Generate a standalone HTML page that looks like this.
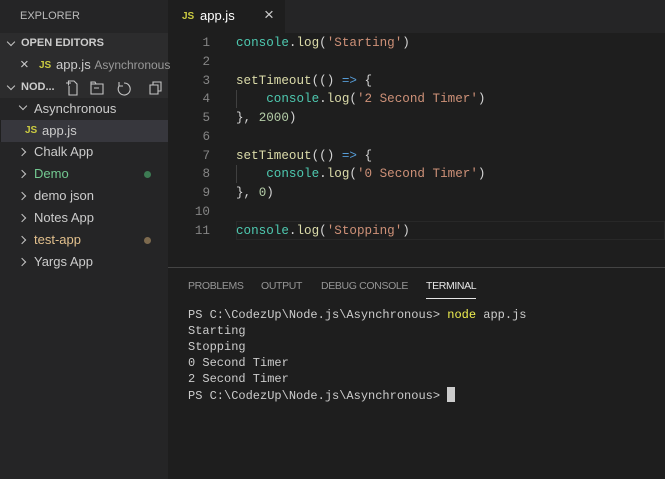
<!DOCTYPE html>
<html><head><style>
*{margin:0;padding:0;box-sizing:border-box}
body{width:665px;height:479px;background:#1e1e1e;font-family:"Liberation Sans",sans-serif;position:relative;overflow:hidden;color:#ccc}
.sb{position:absolute;left:0;top:0;width:168px;height:479px;background:#252526}
.abs{position:absolute;white-space:nowrap}
.row{position:absolute;left:0;width:168px;height:22px;font-size:13px;line-height:22px;color:#ccc;white-space:nowrap}
.chev{position:absolute;width:6px;height:6px;border-right:1.3px solid #c5c5c5;border-bottom:1.3px solid #c5c5c5}
.js{color:#cbcb41;font-weight:bold;font-size:10px;font-family:"Liberation Sans",sans-serif}
.code{position:absolute;left:170px;top:34px;font-family:"Liberation Mono",monospace;font-size:12.6px;line-height:18.75px}
.ln{position:absolute;width:40px;text-align:right;color:#858585}
.c{position:absolute;left:66px;color:#d4d4d4;white-space:pre}
.f{color:#4ec9b0}.m{color:#dcdcaa}.s{color:#ce9178}.k{color:#569cd6}.n{color:#b5cea8}
.term{position:absolute;left:188px;top:306px;font-family:"Liberation Mono",monospace;font-size:12px;line-height:16px;color:#ccc;white-space:pre}
.pt{position:absolute;top:280px;font-size:10.5px;letter-spacing:-0.35px;color:#969696;white-space:nowrap}
</style></head><body>
<div class="sb">
  <div class="abs" style="left:20px;top:10px;font-size:11px;color:#bbb">EXPLORER</div>
  <div class="abs" style="left:0;top:33px;width:168px;height:65px;background:#2c2c2d"></div>
  <div class="chev" style="left:8px;top:39px;transform:rotate(45deg)"></div>
  <div class="abs" style="left:21px;top:37px;font-size:11px;font-weight:bold;color:#ccc">OPEN EDITORS</div>
  <div class="abs" style="left:20px;top:57px;font-size:15px;color:#ccc;line-height:16px">×</div>
  <div class="abs js" style="left:39px;top:60px">JS</div>
  <div class="abs" style="left:56px;top:57px;font-size:13px;color:#ccc">app.js <span style="font-size:12px;color:#999">Asynchronous</span></div>
  <div class="chev" style="left:8px;top:83px;transform:rotate(45deg)"></div>
  <div class="abs" style="left:21px;top:81px;font-size:11px;font-weight:bold;color:#ccc">NOD...</div>
  <svg class="abs" style="left:64px;top:79px" width="100" height="18" fill="none" stroke="#c5c5c5" stroke-width="1.1">
    <path d="M5 2h5l3 3v11H5v-9M2 4h5M4.5 1.5v5"/>
    <path d="M27 5h12v10H27zM27 5v-2h4l1 2M30 9h5"/>
    <path d="M60 4a6 6 0 1 1-5 3M55 3v4h4"/>
    <path d="M86 6h8v9h-8zM89 6V3h8v9h-3"/>
  </svg>
  <div class="row" style="top:98px"><div class="chev" style="left:20px;top:5px;transform:rotate(45deg)"></div><span style="position:absolute;left:34px">Asynchronous</span></div>
  <div class="row" style="top:120px;background:#37373d;border-left:1px solid #1f1f1f"><span class="js" style="position:absolute;left:24px;top:0">JS</span><span style="position:absolute;left:41px">app.js</span></div>
  <div class="row" style="top:141px"><div class="chev" style="left:19px;top:8px;transform:rotate(-45deg)"></div><span style="position:absolute;left:34px">Chalk App</span></div>
  <div class="row" style="top:163px;color:#73c991"><div class="chev" style="left:19px;top:8px;transform:rotate(-45deg)"></div><span style="position:absolute;left:34px">Demo</span><span style="position:absolute;left:144px;top:8px;width:7px;height:7px;border-radius:50%;background:#3d7b53"></span></div>
  <div class="row" style="top:185px"><div class="chev" style="left:19px;top:8px;transform:rotate(-45deg)"></div><span style="position:absolute;left:34px">demo json</span></div>
  <div class="row" style="top:207px"><div class="chev" style="left:19px;top:8px;transform:rotate(-45deg)"></div><span style="position:absolute;left:34px">Notes App</span></div>
  <div class="row" style="top:229px;color:#e2c08d"><div class="chev" style="left:19px;top:8px;transform:rotate(-45deg)"></div><span style="position:absolute;left:34px">test-app</span><span style="position:absolute;left:144px;top:8px;width:7px;height:7px;border-radius:50%;background:#7d6a4e"></span></div>
  <div class="row" style="top:251px"><div class="chev" style="left:19px;top:8px;transform:rotate(-45deg)"></div><span style="position:absolute;left:34px">Yargs App</span></div>
</div>
<div class="abs" style="left:168px;top:0;width:497px;height:33px;background:#252526"></div>
<div class="abs" style="left:168px;top:0;width:117px;height:33px;background:#1e1e1e"></div>
<div class="abs js" style="left:182px;top:11px">JS</div>
<div class="abs" style="left:200px;top:8px;font-size:13px;color:#fff">app.js</div>
<div class="abs" style="left:264px;top:5px;font-size:17px;color:#ccc">×</div>
<div class="abs" style="left:236px;top:221px;width:429px;height:19px;border:1px solid #282828"></div>
<div class="abs" style="left:236px;top:165px;width:1px;height:18px;background:#404040"></div>
<div class="abs" style="left:236px;top:90px;width:1px;height:18px;background:#404040"></div>
<div class="code">
<div class="ln" style="top:0">1</div><div class="c" style="top:0"><span class="f">console</span>.<span class="m">log</span>(<span class="s">'Starting'</span>)</div>
<div class="ln" style="top:18.75px">2</div>
<div class="ln" style="top:37.5px">3</div><div class="c" style="top:37.5px"><span class="m">setTimeout</span>(() <span class="k">=&gt;</span> {</div>
<div class="ln" style="top:56.25px">4</div><div class="c" style="top:56.25px">    <span class="f">console</span>.<span class="m">log</span>(<span class="s">'2 Second Timer'</span>)</div>
<div class="ln" style="top:75px">5</div><div class="c" style="top:75px">}, <span class="n">2000</span>)</div>
<div class="ln" style="top:93.75px">6</div>
<div class="ln" style="top:112.5px">7</div><div class="c" style="top:112.5px"><span class="m">setTimeout</span>(() <span class="k">=&gt;</span> {</div>
<div class="ln" style="top:131.25px">8</div><div class="c" style="top:131.25px">    <span class="f">console</span>.<span class="m">log</span>(<span class="s">'0 Second Timer'</span>)</div>
<div class="ln" style="top:150px">9</div><div class="c" style="top:150px">}, <span class="n">0</span>)</div>
<div class="ln" style="top:168.75px">10</div>
<div class="ln" style="top:187.5px">11</div><div class="c" style="top:187.5px"><span class="f">console</span>.<span class="m">log</span>(<span class="s">'Stopping'</span>)</div>
</div>
<div class="abs" style="left:168px;top:267px;width:497px;height:1px;background:#444"></div>
<div class="pt" style="left:188px">PROBLEMS</div>
<div class="pt" style="left:261px">OUTPUT</div>
<div class="pt" style="left:321px">DEBUG CONSOLE</div>
<div class="pt" style="left:426px;color:#e7e7e7">TERMINAL</div>
<div class="abs" style="left:426px;top:298px;width:50px;height:1px;background:#e7e7e7"></div>
<div class="term" style="top:307px">PS C:\CodezUp\Node.js\Asynchronous&gt; <span style="color:#f0f050">node</span> app.js
Starting
Stopping
0 Second Timer
2 Second Timer
PS C:\CodezUp\Node.js\Asynchronous&gt; <span style="display:inline-block;width:8px;height:15px;background:#ccc;vertical-align:-3px"></span></div>
</body></html>
